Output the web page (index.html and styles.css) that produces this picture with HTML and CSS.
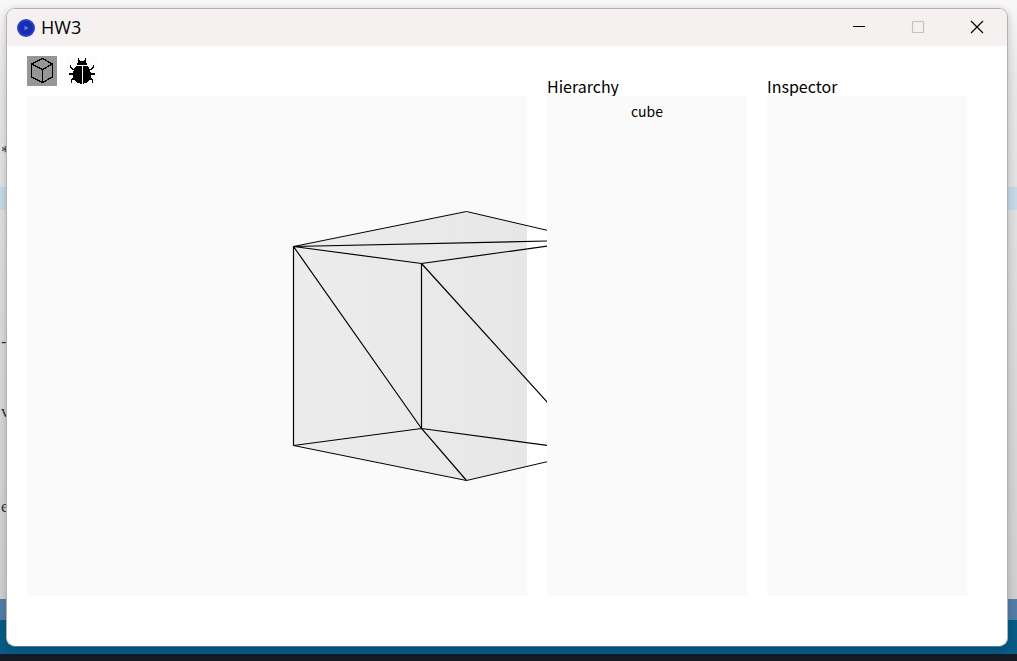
FILE: index.html
```html
<!DOCTYPE html>
<html lang="en">
<head>
<meta charset="utf-8">
<title>HW3</title>
<link rel="stylesheet" href="styles.css">
</head>
<body>
<div class="desktop">
  <div class="backdrop">
    <div class="editor">
      <div class="line line-star">*</div>
      <div class="line line-active"></div>
      <div class="line line-dash">-</div>
      <div class="line line-v">v</div>
      <div class="line line-e">e</div>
    </div>
    <div class="editor-status"></div>
    <div class="status-bar"></div>
    <div class="taskbar"></div>
  </div>
  <div class="window">
    <header class="titlebar">
      <svg class="app-icon" viewBox="0 0 18 18" aria-hidden="true">
        <circle cx="9" cy="9" r="9" fill="#2a42c4"/>
        <circle cx="9" cy="9" r="7" fill="#1c2bb4"/>
        <path d="M7.500 6.800L11.500 9L7.500 11.200Z" fill="#4a91e6"/>
      </svg>
      <h1 class="title">HW3</h1>
      <div class="controls">
        <button class="control" aria-label="Minimize"><svg viewBox="0 0 12 12"><path d="M0 5.500H12"/></svg></button>
        <button class="control" aria-label="Maximize" disabled><svg viewBox="0 0 12 12"><rect x=".5" y=".5" width="11" height="11" rx="1"/></svg></button>
        <button class="control" aria-label="Close"><svg viewBox="0 0 12 12"><path d="M0 0L12 12M12 0L0 12"/></svg></button>
      </div>
    </header>
    <main class="workspace">
      <nav class="toolbar">
        <button class="tool tool-selected" aria-label="Cube">
          <svg viewBox="0 0 30 30" shape-rendering="crispEdges"><path d="M15.500 2.500L25.500 8V21L15.500 26.500L4.500 21V8ZM4.500 8L15.500 13.500L25.500 8M15.500 13.500V26.500" fill="none" stroke="#000" stroke-width="1.300"/></svg>
        </button>
        <button class="tool" aria-label="Debug">
          <svg viewBox="0 0 30 30" shape-rendering="crispEdges">
            <path d="M10 9C10 6 12 4.500 15 4.500S20 6 20 9ZM9 10H14.500V28C9 27 6 24 6 19C6 15 7 12 9 10ZM16 10H21C23 12 24 15 24 19C24 24 21 27 16 28Z"/>
            <path d="M12.500 6L11 2.500M17.500 6L19 2.500M8 14L4.500 12.500L3 9.500M22 14L25.500 12.500L27 9.500M7 18H2M23 18H28M8 22L5 23.500L4 26.500M22 22L25 23.500L26 26.500" fill="none" stroke="#000" stroke-width="1.500"/>
          </svg>
        </button>
      </nav>
      <section class="scene" aria-label="Scene">
        <svg class="scene-view" viewBox="0 0 520 500" preserveAspectRatio="xMaxYMid meet">
          <defs>
            <linearGradient id="shade" x1="0" x2="1" y1="0" y2="0">
              <stop offset="0" stop-color="#ececec"/>
              <stop offset="1" stop-color="#e7e7e7"/>
            </linearGradient>
          </defs>
          <path d="M266.500 150.500L439.500 115.500L500 129.500V370L439.500 384.500L266.500 349.500Z" fill="url(#shade)"/>
          <g class="edges">
            <path class="edge-thin" d="M266.500 150.500L439.500 115.500L521 134.500M266.500 349.500L439.500 384.500L521 365.500"/>
            <path d="M266.500 349.500V150.500L521 145M266.500 150.500L394.500 167.500L521 150M394.500 167.500V332.500M266.500 150.500L394.500 332.500L439.500 384.500M394.500 167.500L521 307M266.500 349.500L394.500 332.500L521 349.500"/>
          </g>
        </svg>
      </section>
      <h2 class="heading heading-hierarchy">Hierarchy</h2>
      <section class="panel panel-hierarchy" aria-label="Hierarchy">
        <button class="node">cube</button>
      </section>
      <h2 class="heading heading-inspector">Inspector</h2>
      <section class="panel panel-inspector" aria-label="Inspector"></section>
    </main>
  </div>
</div>
</body>
</html>
```
FILE: styles.css
```css
* { box-sizing: border-box; }

body {
  margin: 0;
  color: #000;
  font-family: "Noto Sans CJK SC", "Noto Sans", sans-serif;
}

button {
  padding: 0;
  border: 0;
  background: none;
  color: inherit;
  font: inherit;
}

.desktop {
  position: relative;
  display: flex;
  min-height: 100vh;
  padding: 8px 9px 14px 6px;
}

.backdrop {
  position: absolute;
  inset: 0;
  display: flex;
  flex-direction: column;
}

.editor {
  display: flex;
  flex: 1;
  flex-direction: column;
  padding-top: 142px;
  background: linear-gradient(#f8f8f8, #e8e8e8 80px, #dedede 260px, #d0d0d0);
}

.line {
  height: 20px;
  padding-left: 1px;
  color: #333;
  font: 17px/20px "Liberation Serif", serif;
}

.line-active {
  height: 23px;
  margin-top: 25px;
  background: #c5d9e7;
}

.line-dash { margin-top: 122px; }
.line-v { margin-top: 50px; }
.line-e { margin-top: 75px; }

.editor-status { height: 21px; background: #527da8; }
.status-bar { height: 34px; background: #065b87; }
.taskbar { height: 7px; background: #151b24; }

.window {
  position: relative;
  display: flex;
  flex: 1;
  flex-direction: column;
  overflow: hidden;
  border: 1px solid #b5b0b2;
  border-bottom-color: #4d7d99;
  border-radius: 9px;
  background: #fff;
  box-shadow: 0 2px 8px #0003;
}

.titlebar {
  display: flex;
  align-items: center;
  height: 37px;
  padding: 0 1px 0 10px;
  background: #f5f1f1;
}

.app-icon { width: 18px; height: 18px; }

.title {
  margin: 0 0 2px 6px;
  font: 400 18px/24px "Open Sans", "Noto Sans", sans-serif;
}

.controls {
  display: flex;
  align-self: stretch;
  margin-left: auto;
}

.control {
  display: grid;
  place-items: center;
  width: 59px;
  padding-bottom: 1px;
}

.control svg {
  width: 12px;
  height: 12px;
  overflow: visible;
  fill: none;
  stroke: #000;
  stroke-width: 1.2px;
}

.control:disabled svg { stroke: #c4c0c1; }

.workspace {
  display: grid;
  flex: 1;
  grid-template-columns: 5fr 2fr 2fr;
  grid-template-rows: 40px 1fr;
  column-gap: 20px;
  padding: 10px 40px 50px 20px;
}

.toolbar {
  display: flex;
  grid-area: 1 / 1;
  align-items: flex-start;
  gap: 10px;
}

.tool {
  width: 30px;
  height: 30px;
  background: #fcfcfc;
}

.tool svg { display: block; }
.tool-selected { background: #969696; }

.heading {
  align-self: end;
  margin: 0;
  font-size: 16px;
  font-weight: 400;
  line-height: 20px;
}

.heading-hierarchy { grid-area: 1 / 2; }
.heading-inspector { grid-area: 1 / 3; }

.scene {
  display: flex;
  grid-area: 2 / 1;
  background: #fafafa;
}

.scene-view {
  flex: none;
  width: calc(100% + 20px);
  height: 100%;
}

.edges {
  fill: none;
  stroke: #000;
  stroke-width: 1.2px;
}

.edge-thin { stroke-width: 1px; }

.panel {
  padding-top: 5px;
  background: #fafafa;
}

.panel-hierarchy { grid-area: 2 / 2; }
.panel-inspector { grid-area: 2 / 3; }

.node {
  display: block;
  width: 100%;
  font-size: 14px;
  line-height: 20px;
  text-align: center;
}
```
